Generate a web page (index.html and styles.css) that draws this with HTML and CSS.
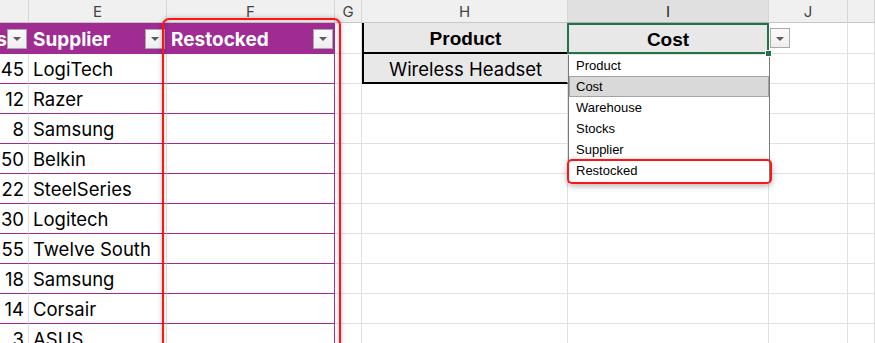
FILE: index.html
```html
<!doctype html>
<html>
  <head>
    <meta charset="UTF-8" />
    <title>Restocked lookup</title>
    <link rel="stylesheet" href="styles.css">
  </head>
  <body>
    <div class="sheet">
      <!-- column letters -->
      <div class="row col-heads">
        <div class="ch"></div>
        <div class="ch">E</div>
        <div class="ch">F</div>
        <div class="ch">G</div>
        <div class="ch">H</div>
        <div class="ch ch-active">I</div>
        <div class="ch">J</div>
        <div class="ch"></div>
      </div>
      <!-- table header + lookup header -->
      <div class="row row-first">
        <div class="cell th th-num"><span class="th-text">Stocks</span><span class="filter"></span></div>
        <div class="cell th"><span class="th-text">Supplier</span><span class="filter"></span></div>
        <div class="cell th th-last"><span class="th-text">Restocked</span><span class="filter"></span></div>
        <div class="cell"></div>
        <div class="cell lookup lookup-head lookup-first">Product</div>
        <div class="cell lookup lookup-head lookup-active">Cost</div>
        <div class="cell cell-dv"><span class="filter"></span></div>
        <div class="cell"></div>
      </div>
      <div class="row">
        <div class="cell td num">45</div>
        <div class="cell td">LogiTech</div>
        <div class="cell td td-last"></div>
        <div class="cell"></div>
        <div class="cell lookup lookup-first">Wireless Headset</div>
        <div class="cell lookup"></div>
        <div class="cell"></div>
        <div class="cell"></div>
      </div>
      <div class="row">
        <div class="cell td num">12</div>
        <div class="cell td">Razer</div>
        <div class="cell td td-last"></div>
        <div class="cell"></div>
        <div class="cell"></div>
        <div class="cell"></div>
        <div class="cell"></div>
        <div class="cell"></div>
      </div>
      <div class="row">
        <div class="cell td num">8</div>
        <div class="cell td">Samsung</div>
        <div class="cell td td-last"></div>
        <div class="cell"></div>
        <div class="cell"></div>
        <div class="cell"></div>
        <div class="cell"></div>
        <div class="cell"></div>
      </div>
      <div class="row">
        <div class="cell td num">150</div>
        <div class="cell td">Belkin</div>
        <div class="cell td td-last"></div>
        <div class="cell"></div>
        <div class="cell"></div>
        <div class="cell"></div>
        <div class="cell"></div>
        <div class="cell"></div>
      </div>
      <div class="row">
        <div class="cell td num">22</div>
        <div class="cell td">SteelSeries</div>
        <div class="cell td td-last"></div>
        <div class="cell"></div>
        <div class="cell"></div>
        <div class="cell"></div>
        <div class="cell"></div>
        <div class="cell"></div>
      </div>
      <div class="row">
        <div class="cell td num">30</div>
        <div class="cell td">Logitech</div>
        <div class="cell td td-last"></div>
        <div class="cell"></div>
        <div class="cell"></div>
        <div class="cell"></div>
        <div class="cell"></div>
        <div class="cell"></div>
      </div>
      <div class="row">
        <div class="cell td num">55</div>
        <div class="cell td">Twelve South</div>
        <div class="cell td td-last"></div>
        <div class="cell"></div>
        <div class="cell"></div>
        <div class="cell"></div>
        <div class="cell"></div>
        <div class="cell"></div>
      </div>
      <div class="row">
        <div class="cell td num">18</div>
        <div class="cell td">Samsung</div>
        <div class="cell td td-last"></div>
        <div class="cell"></div>
        <div class="cell"></div>
        <div class="cell"></div>
        <div class="cell"></div>
        <div class="cell"></div>
      </div>
      <div class="row">
        <div class="cell td num">14</div>
        <div class="cell td">Corsair</div>
        <div class="cell td td-last"></div>
        <div class="cell"></div>
        <div class="cell"></div>
        <div class="cell"></div>
        <div class="cell"></div>
        <div class="cell"></div>
      </div>
      <div class="row row-cut">
        <div class="cell td num">3</div>
        <div class="cell td">ASUS</div>
        <div class="cell td td-last"></div>
        <div class="cell"></div>
        <div class="cell"></div>
        <div class="cell"></div>
        <div class="cell"></div>
        <div class="cell"></div>
      </div>

      <!-- data validation list -->
      <ul class="dv-list">
        <li>Product</li>
        <li class="dv-hover">Cost</li>
        <li>Warehouse</li>
        <li>Stocks</li>
        <li>Supplier</li>
        <li>Restocked</li>
      </ul>

      <!-- callouts -->
      <div class="mark mark-column"></div>
      <div class="mark mark-item"></div>
    </div>
  </body>
</html>
```

FILE: styles.css
```css
body {
  margin: 0;
  width: 875px;
  height: 343px;
  overflow: hidden;
  background: #fff;
  font-family: 'Inter', 'Open Sans', sans-serif;
  color: #000;
}

.sheet {
  position: relative;
  height: 343px;
  overflow: hidden;
}

/* grid rows */
.row {
  display: grid;
  grid-template-columns: 29px 138px 168px 27px 206px 201px 79px 1fr;
  height: 30px;
}
.row.col-heads {
  height: 23px;
}
.row.row-first {
  height: 31px;
}
.row.row-cut {
  height: 19px;
  align-items: start;
}

.cell {
  box-sizing: border-box;
  border-right: 1px solid #e1e1e1;
  border-bottom: 1px solid #e1e1e1;
  display: flex;
  align-items: center;
  overflow: hidden;
  white-space: nowrap;
  font-size: 18.5px;
  padding-top: 1px;
}
.row-cut > .cell {
  height: 30px;
}

/* column letters */
.ch {
  box-sizing: border-box;
  display: flex;
  align-items: center;
  justify-content: center;
  background: #f0f0f0;
  border-right: 1px solid #d6d6d6;
  border-bottom: 1px solid #c6c6c6;
  font-size: 15px;
  color: #444;
}
.ch-active {
  background: #e0e0e0;
  color: #222;
  border-bottom-color: #b0b0b0;
}

/* purple table */
.th {
  background: #a02b93;
  border-right-color: #a02b93;
  border-bottom-color: #a02b93;
  color: #fff;
  font-weight: 700;
  font-size: 19px;
  justify-content: space-between;
  padding-left: 4px;
}
.th-num {
  justify-content: flex-end;
  padding-left: 0;
}
.th-text {
  flex-shrink: 0;
  padding-top: 2px;
}
.td {
  border-bottom-color: #a02b93;
  padding-left: 4px;
}
.td.num {
  justify-content: flex-end;
  padding-left: 0;
  padding-right: 4px;
}
.td-last {
  border-right-color: #a02b93;
}

/* filter button */
.filter {
  flex-shrink: 0;
  box-sizing: border-box;
  width: 20px;
  height: 20px;
  margin-right: 1px;
  border: 1px solid #a9a9a9;
  background: linear-gradient(#fbfbfb, #eeeeee);
  display: flex;
  align-items: center;
  justify-content: center;
}
.filter::after {
  content: '';
  border-left: 4px solid transparent;
  border-right: 4px solid transparent;
  border-top: 4px solid #5a5a5a;
  margin-top: 1px;
}
.cell-dv {
  padding-left: 1px;
  padding-top: 0;
}

/* lookup block */
.lookup {
  background: #e8e8e8;
  justify-content: center;
}
.lookup-first {
  border-left: 2px solid #000;
  border-bottom: 2px solid #000;
}
.lookup-head {
  font-family: 'Liberation Sans', Arial, sans-serif;
  font-weight: 700;
  font-size: 19px;
  padding-top: 3px;
}
.lookup-active {
  position: relative;
  overflow: visible;
}
.lookup-active::after {
  content: '';
  position: absolute;
  left: -1px;
  top: 0;
  right: -1px;
  bottom: -1px;
  border: 2px solid #217346;
}
.lookup-active::before {
  content: '';
  position: absolute;
  right: -4px;
  bottom: -4px;
  width: 5px;
  height: 5px;
  background: #217346;
  border: 1px solid #fff;
  z-index: 1;
}

/* data validation dropdown */
.dv-list {
  position: absolute;
  left: 568px;
  top: 55px;
  width: 202px;
  margin: 0;
  padding: 0 0 1px;
  list-style: none;
  box-sizing: border-box;
  background: #fff;
  border: 1px solid #7a7a7a;
  border-top: none;
  font-family: 'Liberation Sans', Arial, sans-serif;
  font-size: 13px;
}
.dv-list > li {
  box-sizing: border-box;
  height: 21px;
  line-height: 22px;
  padding-left: 7px;
}
.dv-list > .dv-hover {
  background: #d9d9d9;
  border: 1px solid #a3a3a3;
  line-height: 20px;
  padding-left: 6px;
}

/* red callouts */
.mark {
  position: absolute;
  box-sizing: border-box;
  border: 2px solid #ff1414;
  box-shadow: 0 0 5px rgba(0, 0, 0, 0.25), inset 0 0 5px rgba(0, 0, 0, 0.2);
}
.mark-column {
  left: 162px;
  top: 18px;
  width: 179px;
  height: 340px;
  border-radius: 7px;
}
.mark-item {
  left: 567px;
  top: 159px;
  width: 205px;
  height: 25px;
  border-radius: 5px;
  box-shadow: 0 2px 6px rgba(0, 0, 0, 0.3);
}
```
